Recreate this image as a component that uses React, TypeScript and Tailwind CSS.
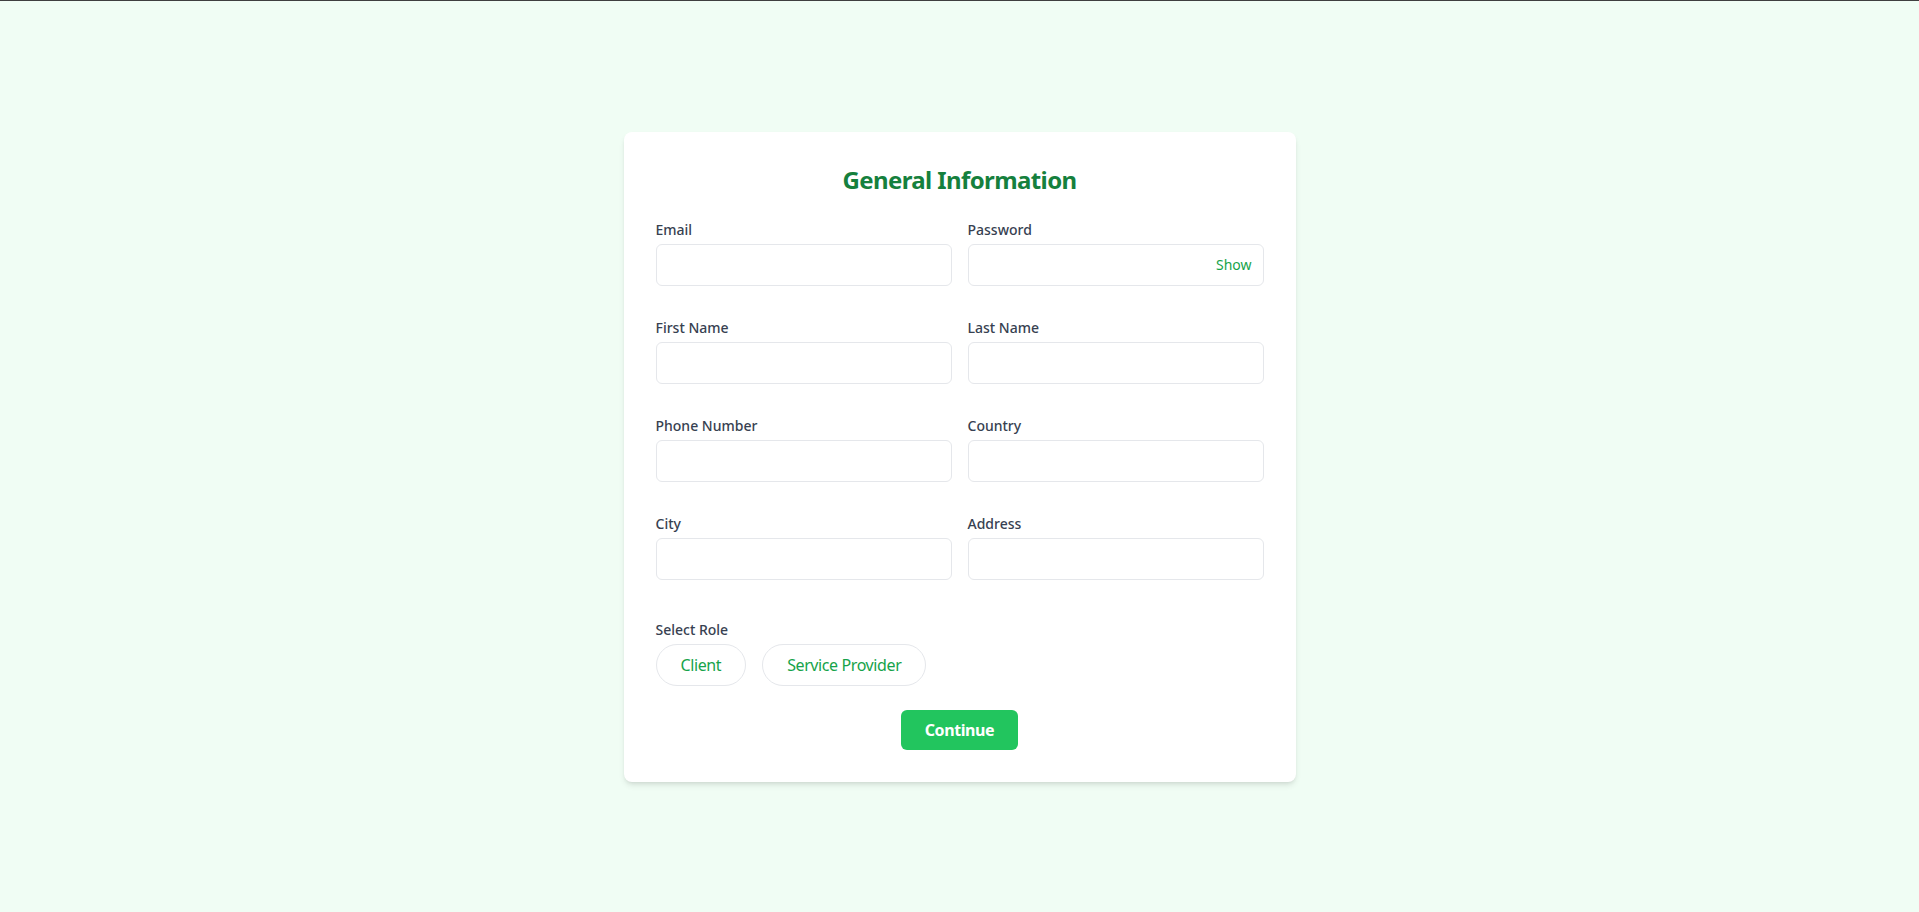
import React, { useState } from "react";

const fields = [
  { id: "email", label: "Email", type: "email" },
  { id: "password", label: "Password", type: "password" },
  { id: "firstName", label: "First Name", type: "text" },
  { id: "lastName", label: "Last Name", type: "text" },
  { id: "phone", label: "Phone Number", type: "tel" },
  { id: "country", label: "Country", type: "text" },
  { id: "city", label: "City", type: "text" },
  { id: "address", label: "Address", type: "text" },
];

export default function App() {
  const [showPassword, setShowPassword] = useState(false);
  const [role, setRole] = useState<string | null>(null);

  return (
    <div className="min-h-screen border-t border-[#3f3f3f] bg-[#f0fdf4] flex items-center justify-center font-['Noto_Sans','Open_Sans',sans-serif]">
      <div className="w-[672px] bg-white rounded-lg shadow-md p-8">
        <h2 className="text-2xl font-bold tracking-tight text-[#15803d] text-center mb-6">
          General Information
        </h2>

        {/* Input grid */}
        <div className="grid grid-cols-2 gap-x-4 gap-y-8">
          {fields.map((f) => (
            <div key={f.id}>
              <label htmlFor={f.id} className="block text-sm font-medium text-[#374151] mb-1">
                {f.label}
              </label>
              {f.id === "password" ? (
                <div className="relative">
                  <input
                    id={f.id}
                    type={showPassword ? "text" : "password"}
                    className="w-full border border-[#e5e7eb] rounded-md px-3 py-2 pr-14 text-base outline-none"
                  />
                  <button
                    type="button"
                    onClick={() => setShowPassword(!showPassword)}
                    className="absolute right-3 top-1/2 -translate-y-1/2 text-sm text-[#16a34a]"
                  >
                    {showPassword ? "Hide" : "Show"}
                  </button>
                </div>
              ) : (
                <input
                  id={f.id}
                  type={f.type}
                  className="w-full border border-[#e5e7eb] rounded-md px-3 py-2 text-base outline-none"
                />
              )}
            </div>
          ))}
        </div>

        {/* Role selection */}
        <div className="mt-10">
          <label className="block text-sm font-medium text-[#374151] mb-1">Select Role</label>
          <div className="flex gap-4">
            {["Client", "Service Provider"].map((r) => (
              <button
                key={r}
                type="button"
                onClick={() => setRole(r)}
                className={`px-6 py-2 rounded-full border text-base tracking-tight ${
                  role === r ? "bg-[#22c55e] border-[#22c55e] text-white" : "border-[#e5e7eb] text-[#16a34a]"
                }`}
              >
                {r}
              </button>
            ))}
          </div>
        </div>

        <div className="flex justify-center mt-6">
          <button type="button" className="bg-[#22c55e] text-white font-bold tracking-tight px-6 py-2 rounded-md">
            Continue
          </button>
        </div>
      </div>
    </div>
  );
}
